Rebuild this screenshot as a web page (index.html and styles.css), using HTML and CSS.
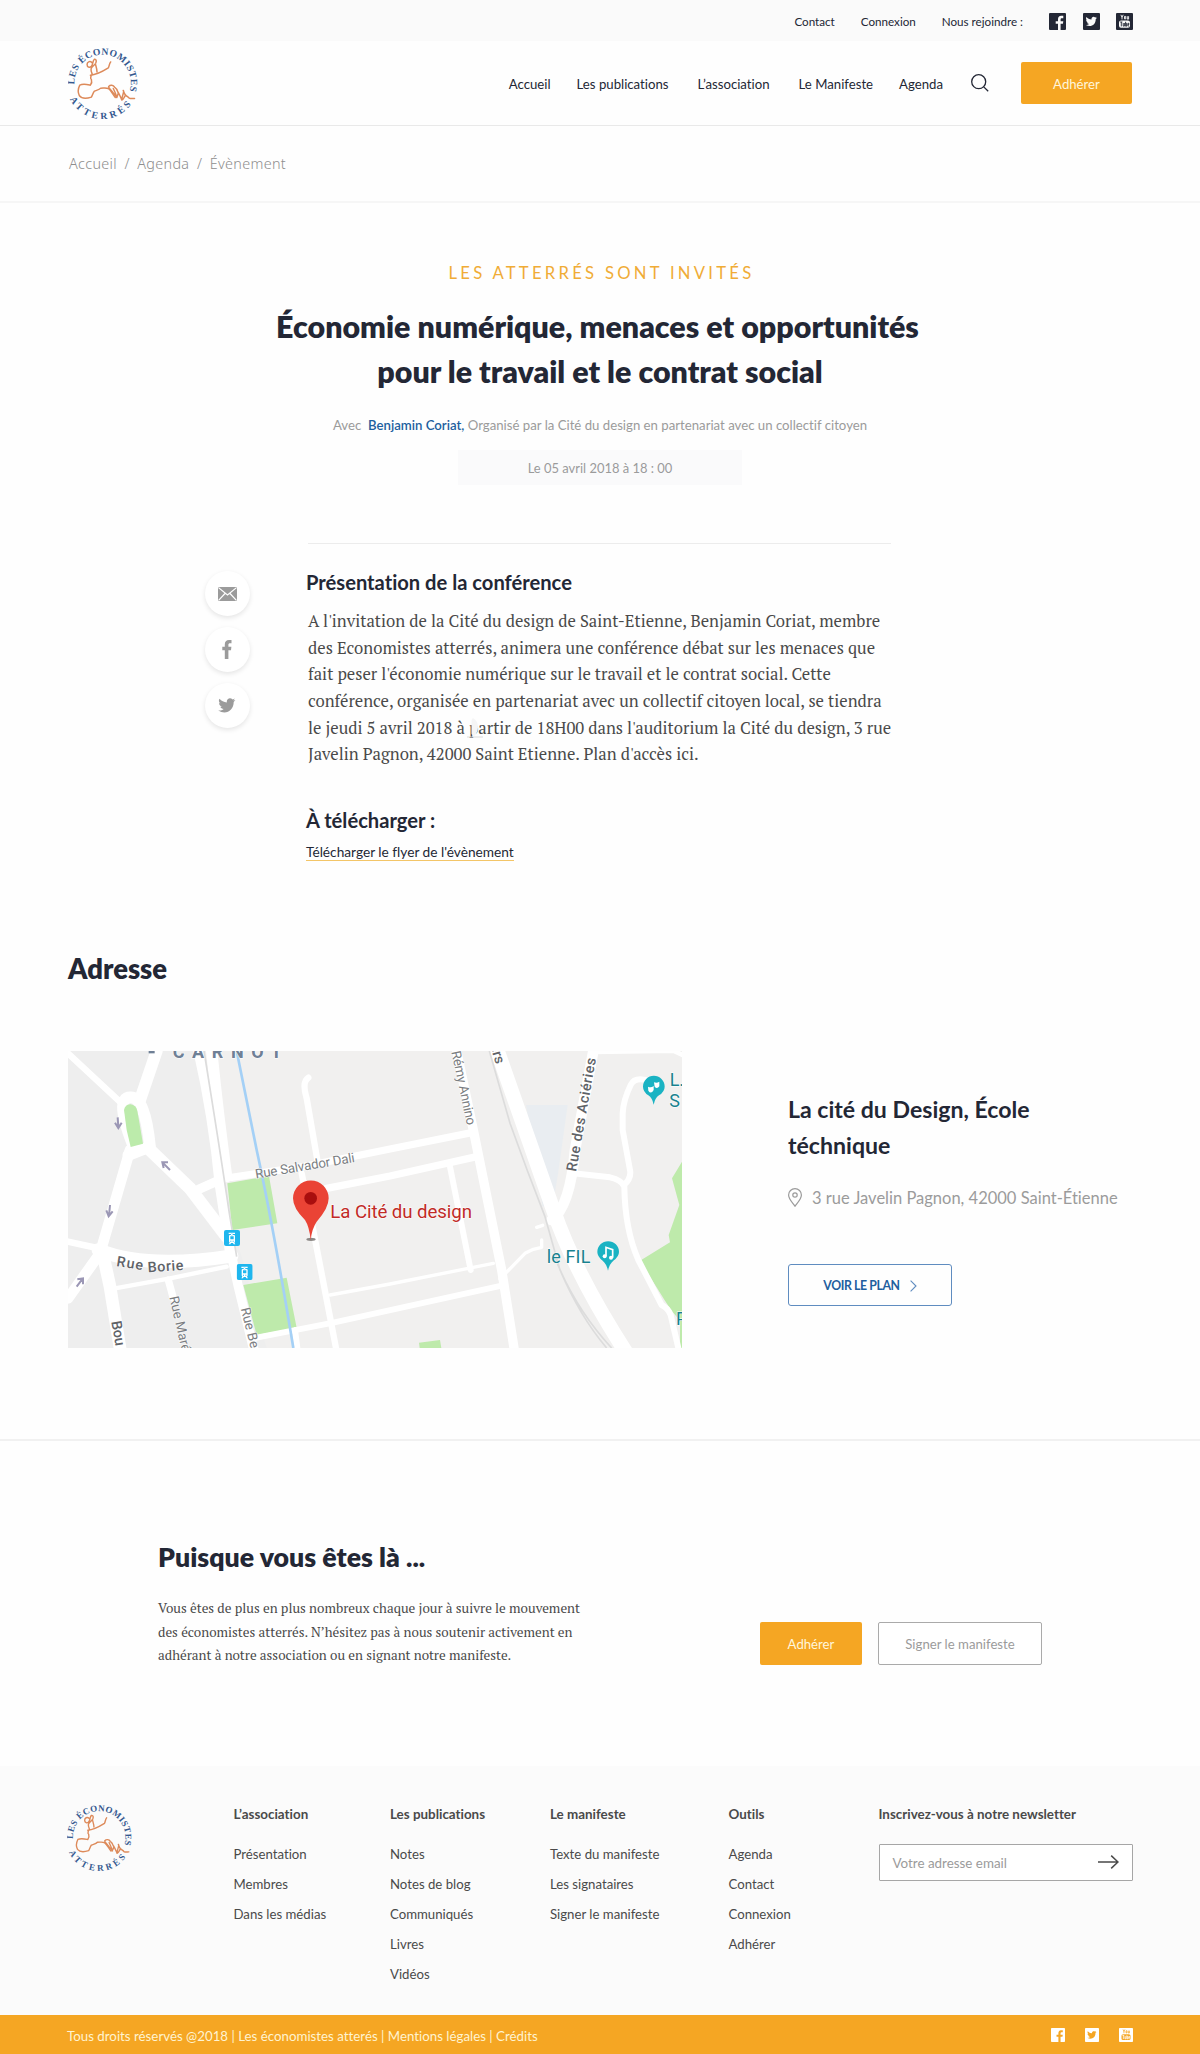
FILE: index.html
```html
<!DOCTYPE html>
<html lang="fr">
<head>
<meta charset="utf-8">
<title>Les économistes atterrés – Évènement</title>
<link rel="stylesheet" href="styles.css">
</head>
<body>
<svg class="sprite" aria-hidden="true">
  <defs>
    <path id="arc-top" d="M43,138 A85,85 0 1 1 211,151"/>
    <path id="arc-bottom" d="M27,176 A108,108 0 0 0 226,176"/>
    <symbol id="logo" viewBox="24 22 210 220">
      <g class="logo-text">
        <text><textPath href="#arc-top" textLength="296">LES ÉCONOMISTES</textPath></text>
        <text><textPath href="#arc-bottom" startOffset="6" textLength="222">ATTERRÉS</textPath></text>
      </g>
      <g class="logo-figure">
        <path d="M96,72c-7-6-15-2-15,6c0,8 8,11 13,5c6-6 3-16 9-21c6-1 7,6 4,12c-4,7-12,10-14,17c-1,6 2,12 4,17M106,76c2,8 5,15 5,24"/>
        <path d="M91,110c20-1 38-12 54-22c3-4 2-12 7-18M93,112c0,4-4,7 1,11c2,6 0,13-3,17c-10-2-22-5-32,0c-5,10-6,23-1,32c7,9 24,8 36,4c4-7 5-13 9-18c7-3 15-4 19-9c9,0 16-2 23,1c9,6 14,20 21,27"/>
        <path d="M146,144c5-5 14-5 18,2c7,4 9,12 11,18c-1,5-2,9-5,13c-7-10-14-18-24-31M160,150c5,10 8,18 11,27M190,156c5,3-5,16-4,29c3,1 7-9 11-15c4,4 9,6 11,9c6,3 10,1 16,1M174,160c5,8 8,16 12,25M190,156c2,6 4,11 7,14"/>
      </g>
    </symbol>
    <symbol id="facebook" viewBox="0 0 17 17"><path fill-rule="evenodd" d="M1 0h15a1 1 0 0 1 1 1v15a1 1 0 0 1-1 1H1a1 1 0 0 1-1-1V1a1 1 0 0 1 1-1zM9 17h2.600v-6.300h2.300l.4-2.500h-2.700V6.500c0-.8.4-1.200 1.200-1.200h1.500V2.800h-2.200C10.200 2.800 9 4.200 9 6.200v2H6.700v2.500H9z"/></symbol>
    <symbol id="twitter" viewBox="0 0 17 17"><path fill-rule="evenodd" d="M1 0h15a1 1 0 0 1 1 1v15a1 1 0 0 1-1 1H1a1 1 0 0 1-1-1V1a1 1 0 0 1 1-1zM14 4.800l-1.300.3.900-1.300-1.500.6C11 3.200 8.200 3.800 8.500 6.400 6.300 6.300 4.700 5.400 3.400 3.900c-.7 1.300-.3 2.600.7 3.300l-1-.2c0 1.200.8 2 1.900 2.300l-1 .1c.3.900 1 1.400 2.100 1.500-.9.800-2 1.100-3.300 1 5 2.900 10-.2 9.900-5.700z"/></symbol>
    <symbol id="youtube" viewBox="0 0 17 17"><path fill-rule="evenodd" d="M1 0h15a1 1 0 0 1 1 1v15a1 1 0 0 1-1 1H1a1 1 0 0 1-1-1V1a1 1 0 0 1 1-1zM5 7.500Q3 7.500 3 9.500v3.200q0 2 2 2h7q2 0 2-2V9.500q0-2-2-2z"/><path class="youtube-hollow" d="M4.900 1.800l1.100 2.600v2M7.200 1.800L6 4.400M8.500 3.400v2.500h1.200V3.400zM11.300 3.200v2.900h1.300V3.200"/><path class="youtube-solid" d="M4.200 9h2.200M5.300 9v4.400M7.200 10v3.100h1.200V10M9.600 8.800v4.400h1v-2.800h-1M12.900 13h-1v-2.700h1v1.300h-1"/></symbol>
    <symbol id="bird" viewBox="0 0 20 17"><path d="M19.500 2.300l-2.300.6L19 .6l-2.600 1C13.500-1.200 9.200.8 9.800 5 6.400 4.800 3.600 3.300 1.500.8.2 3.200.8 5 2.700 6.300L1 5.800c0 2 1.200 3.400 3.200 4l-1.700.1c.5 1.500 1.800 2.500 3.700 2.600C4.500 13.900 2.400 14.500 0 14.200c8.700 5.300 17.700.2 17.600-9.800z"/></symbol>
    <symbol id="tram" viewBox="0 0 48 48"><rect width="48" height="48" rx="6" fill="#1fb6ee"/><path fill="#fff" fill-rule="evenodd" d="M14 8h19v4H14zM21 11h5v5h-5zM18 15h12q3 0 3 3v16q0 3-2 4l3 5h-5l-2-4h-6l-2 4h-5l3-5q-2-1-2-4V18q0-3 3-3zM19 19v9h10v-9zM19 32v3h3v-3zM26 32v3h3v-3z"/></symbol>
  </defs>
</svg>

<div class="topbar">
  <a>Contact</a><a>Connexion</a><span class="join">Nous rejoindre :</span>
  <div class="socials"><svg><use href="#facebook"/></svg><svg><use href="#twitter"/></svg><svg><use href="#youtube"/></svg></div>
</div>

<header class="header">
  <svg class="logo"><use href="#logo"/></svg>
  <nav class="nav">
    <a class="n1">Accueil</a><a class="n2">Les publications</a><a class="n3">L’association</a><a class="n4">Le Manifeste</a><a class="n5">Agenda</a>
    <svg class="search" viewBox="0 0 18 18"><circle cx="7.700" cy="7.700" r="7"/><path d="M12.700 12.900L17.200 17.300"/></svg>
  </nav>
  <a class="button join-button">Adhérer</a>
</header>

<div class="breadcrumb"><a>Accueil</a><span>/</span><a>Agenda</a><span>/</span><a>Évènement</a></div>

<section class="hero">
  <p class="overline">LES ATTERRÉS SONT INVITÉS</p>
  <h1><span>Économie numérique, menaces et opportunités</span> pour le travail et le contrat social</h1>
  <p class="meta">Avec&nbsp; <b>Benjamin Coriat,</b> Organisé par la Cité du design en partenariat avec un collectif citoyen</p>
  <p class="date">Le 05 avril 2018 à 18 : 00</p>
</section>

<section class="article">
  <aside class="share">
    <a><svg width="19" height="14" viewBox="0 0 19 14"><rect width="19" height="14" rx="1"/><path class="fold" d="M.5.600L9.500 8l9-7.400M.6 13.400L7 6.500M18.400 13.400L12 6.500"/></svg></a>
    <a><svg width="10" height="19" viewBox="0 0 10 19"><path d="M2.800 19V10.200H.3V6.800h2.500V4.500C2.800 1.700 4.300 0 7 0h2.500v3.300H8C6.900 3.300 6.400 3.800 6.400 4.800v2h3L9 10.200H6.400V19z"/></svg></a>
    <a><svg width="18" height="15"><use href="#bird"/></svg></a>
  </aside>
  <div class="body">
    <h2>Présentation de la conférence</h2>
    <p class="text">A l'invitation de la Cité du design de Saint-Etienne, Benjamin Coriat, membre<br>des Economistes atterrés, animera une conférence débat sur les menaces que<br>fait peser l'économie numérique sur le travail et le contrat social. Cette<br>conférence, organisée en partenariat avec un collectif citoyen local, se tiendra<br>le jeudi 5 avril 2018 à <span class="marked">p<svg class="mark" viewBox="0 0 17 20"><path fill="#f5f5f5" d="M6 0q5 3 5 9t-4 9L4.500 16V2z"/><path fill="#dcdcdc" d="M0 18.500h16v1H0z"/></svg></span>artir de 18H00 dans l'auditorium la Cité du design, 3 rue<br>Javelin Pagnon, 42000 Saint Etienne. Plan d'accès ici.</p>
    <h2 class="download">À télécharger :</h2>
    <a class="file">Télécharger le flyer de l'évènement</a>
  </div>
</section>

<section class="address">
  <h2>Adresse</h2>
  <div class="place">
    <svg class="map" viewBox="24 33 1842 891">
      <rect x="24" y="33" width="1842" height="891" fill="#f1f0ef"/>
      <path fill="#eeeeee" d="M24 33h400L520 560 620 924H24z"/>
      <path fill="#e9edf1" d="M1398 195h125l-28 200-15 90-32 15z"/>
      <g fill="#beeaab">
        <path d="M502 430l125-22 25 142-135 20zM550 735l130-22 30 150-120 22zM1866 365l-30 50 22 80-32 90 4 22-90 55 75 120 20 30 25 30v100h6zM1077 908l63-8 4 24h-65z"/>
      </g>
      <g class="roads">
        <path stroke-width="19" d="M24 40L185 190"/>
        <path stroke-width="36" d="M290 33L240 180"/>
        <path stroke-width="35" d="M225 330Q160 170 212 172Q255 170 270 320L205 345"/>
        <path stroke-width="32" d="M210 330L120 640L24 775"/>
        <path stroke-width="20" d="M24 605L115 625"/>
        <path stroke-width="40" d="M115 630Q260 688 515 648"/>
        <path stroke-width="30" d="M415 33Q460 230 480 440L512 650"/>
        <path stroke-width="34" d="M455 33Q475 230 500 410"/>
        <path stroke-width="28" d="M500 580L535 740L580 924"/>
        <path stroke-width="38" d="M265 325L390 445L500 590"/>
        <path stroke-width="28" d="M400 455L490 415"/>
        <path stroke-width="38" d="M125 625L150 740L180 924"/>
        <path stroke-width="13" d="M165 745L330 715L500 680"/>
        <path stroke-width="22" d="M325 720L340 775"/>
        <path stroke-width="22" d="M515 412L730 380L990 327L1235 278"/>
        <path stroke-width="19" d="M745 113Q725 125 740 175L772 360M725 400L750 520L828 924"/>
        <path stroke-width="22" d="M800 445L990 408L1250 350"/>
        <path stroke-width="28" d="M1190 33L1240 270L1325 690L1362 924"/>
        <path stroke-width="18" d="M1168 370L1232 690"/>
        <path stroke-width="10" d="M810 765L990 732L1300 670M1320 717L1395 640L1420 628L1445 622V600M1430 562L1448 556"/>
        <path stroke-width="18" d="M590 893L820 848L1325 737M705 870L712 924"/>
        <path stroke-width="44" d="M1308 20L1480 510Q1545 700 1700 940"/>
        <path stroke-width="32" d="M1600 33L1545 330Q1530 500 1475 540"/>
        <path stroke-width="18" d="M1540 400L1650 412Q1685 420 1693 440Q1695 570 1735 660L1805 795Q1825 805 1832 825L1855 924M1692 435Q1715 415 1710 390L1688 270V220Q1690 180 1712 135Q1725 107 1775 125"/>
        <path stroke-width="14" d="M1600 36L1840 32L1870 46"/>
      </g>
      <path class="rail" d="M432 33Q480 330 508 520L530 650M1288 33L1350 250Q1400 390 1455 530L1500 690Q1560 830 1640 924M1480 640Q1540 800 1655 924"/>
      <path fill="#bcebab" d="M192 210Q195 193 212 193Q228 195 232 212L249 311 212 321 200 270Z"/>
      <path fill="none" stroke="#a4d0f6" stroke-width="8" d="M530 33L590 330Q640 560 700 924"/>
      <g class="arrows"><path d="M173 232l2 30m-10-14l10 16 10-16M150 495l-3 32m-8-16l7 18 12-15M330 390l-22-22m3 16l-4-17 17 0M50 740l18-24m-16 2l17-3 0 18"/></g>
      <g class="street">
        <text x="338" y="54" class="district" textLength="328">CARNOT</text><path d="M266 33h18v7h-18z" fill="#6f8096"/>
        <text transform="translate(588 416) rotate(-9.500)" textLength="302">Rue Salvador Dali</text>
        <text transform="translate(168 678) rotate(9)" class="main" textLength="80">Rue</text>
        <text transform="translate(264 697) rotate(-4)" class="main" textLength="107">Borie</text>
        <text transform="translate(154 845) rotate(80)" class="main">Bou</text>
        <text transform="translate(328 772) rotate(77)">Rue Maréchal</text>
        <text transform="translate(542 806) rotate(76)">Rue Benoît</text>
        <text transform="translate(1174 36) rotate(78)" textLength="226">Rémy Annino</text>
        <text transform="translate(1290 16) rotate(73)" class="main">ers</text>
        <text transform="translate(1548 396) rotate(-80)" class="main" textLength="345">Rue des Aciéries</text>
      </g>
      <use href="#tram" x="492" y="570" width="48" height="48"/><use href="#tram" x="530" y="672" width="48" height="48"/>
      <ellipse cx="753" cy="598" rx="14" ry="5" fill="#8c8886"/>
      <path fill="#ea4335" d="M752 600Q748 560 735 540Q699 505 699 475A53.500 53.500 0 0 1 806 475Q806 505 770 545Q756 565 752 600Z"/><circle cx="752" cy="475" r="19" fill="#a90e0e"/>
      <g class="poi">
        <text x="811" y="533" class="city" textLength="425">La Cité du design</text>
        <text x="1460" y="668" textLength="131">le FIL</text>
        <text x="1829" y="139">L.</text><text x="1828" y="201">S</text><text x="1848" y="856">P</text>
      </g>
      <g fill="#1ab3c3">
        <path d="M1644 692Q1640 672 1628 662Q1612 650 1612 636A32.500 32.500 0 0 1 1677 636Q1677 650 1660 662Q1648 672 1644 692ZM1781 194Q1777 174 1765 166Q1749 155 1749 140A32.500 32.500 0 0 1 1814 140Q1814 155 1797 166Q1785 174 1781 194Z"/>
      </g>
      <path fill="none" stroke="#fff" stroke-width="5" d="M1638 648v-26l20 7v24"/><g fill="#fff"><circle cx="1634" cy="649" r="6"/><circle cx="1653" cy="653" r="6"/><path d="M1764 140q9 4 17-2v12q-8 14-16 2zM1782 127q9 3 16-2v14q-7 10-14 1z"/></g>
    </svg>
    <div class="venue">
      <h3>La cité du Design, École<br>téchnique</h3>
      <p><svg width="14" height="19" viewBox="0 0 14 19"><path d="M7 18.300C5.500 15.500.6 11.500.6 7A6.400 6.400 0 0 1 13.400 7C13.400 11.500 8.500 15.500 7 18.300Z"/><circle cx="7" cy="7" r="2.200"/></svg>3 rue Javelin Pagnon, 42000 Saint-Étienne</p>
      <a class="plan">VOIR LE PLAN<svg width="7" height="12" viewBox="0 0 7 12"><path d="M.6.600L6 6 .6 11.400"/></svg></a>
    </div>
  </div>
</section>

<section class="support">
  <div class="pitch">
    <h2>Puisque vous êtes là ...</h2>
    <p>Vous êtes de plus en plus nombreux chaque jour à suivre le mouvement<br>des économistes atterrés. N’hésitez pas à nous soutenir activement en<br>adhérant à notre association ou en signant notre manifeste.</p>
  </div>
  <a class="button support-join">Adhérer</a>
  <a class="button outline">Signer le manifeste</a>
</section>

<footer class="footer">
  <svg class="logo"><use href="#logo"/></svg>
  <div class="col"><h4>L’association</h4><a>Présentation</a><a>Membres</a><a>Dans les médias</a></div>
  <div class="col"><h4>Les publications</h4><a>Notes</a><a>Notes de blog</a><a>Communiqués</a><a>Livres</a><a>Vidéos</a></div>
  <div class="col"><h4>Le manifeste</h4><a>Texte du manifeste</a><a>Les signataires</a><a>Signer le manifeste</a></div>
  <div class="col"><h4>Outils</h4><a>Agenda</a><a>Contact</a><a>Connexion</a><a>Adhérer</a></div>
  <div class="col newsletter"><h4>Inscrivez-vous à notre newsletter</h4>
    <div class="field"><span>Votre adresse email</span><svg width="21" height="14" viewBox="0 0 21 14"><path d="M0 7h20M13.200.6L20 7l-6.800 6.400"/></svg></div>
  </div>
</footer>
<div class="legal">
  <span>Tous droits réservés @2018 | Les économistes atterés | Mentions légales | Crédits</span>
  <div class="socials"><svg><use href="#facebook"/></svg><svg><use href="#twitter"/></svg><svg><use href="#youtube"/></svg></div>
</div>
</body>
</html>
```
FILE: styles.css
```css
* { box-sizing: border-box; margin: 0; padding: 0; }
body { width: 1200px; background: #fefefe; color: #232735; font: 13.2px/20px "Lato", sans-serif; font-variant-ligatures: none; }
svg { display: block; flex: none; }
.sprite { position: absolute; width: 0; height: 0; }

.topbar { height: 41px; background: #fafafa; display: flex; justify-content: flex-end; align-items: center; padding: 2px 67px 0 0; font-size: 11.65px; --surface: #fafafa; }
.topbar a { margin-right: 26px; }
.topbar .join { margin-right: 26px; }
.socials { display: flex; }
.topbar .socials { gap: 16.500px; color: #232735; }
.socials svg { width: 17px; height: 17px; fill: currentColor; }
.youtube-hollow { fill: none; stroke: var(--surface); stroke-width: .9; }
.youtube-solid { fill: none; stroke: currentColor; stroke-width: .9; }

.header { height: 85px; border-bottom: 1px solid #e9e9e9; display: flex; align-items: center; padding: 0 68px; }
.header .logo { width: 70px; height: 73px; margin-top: -1px; }
.nav { display: flex; align-items: center; margin-left: auto; padding-top: 2px; }
.nav .n1, .nav .n4 { margin-right: 26px; }
.nav .n2, .nav .n3 { margin-right: 29px; }
.nav .n5 { margin-right: 28px; }
.search { width: 18px; height: 18px; margin-top: -3px; fill: none; stroke: #232735; stroke-width: 1.300; }
.button { display: flex; align-items: center; justify-content: center; height: 42px; padding-top: 1px; background: #f5a623; color: #fff6dc; border-radius: 2px; }
.join-button { width: 111px; margin-left: 32px; }

.breadcrumb { height: 77px; border-bottom: 2px solid #f6f6f6; padding-left: 69px; display: flex; align-items: center; gap: 7.500px; color: #8e8e8e; font: 300 14.4px/20px "Noto Sans", sans-serif; letter-spacing: .32px; }

.hero { height: 340px; padding-top: 60px; display: flex; flex-direction: column; align-items: center; text-align: center; color: #9b9b9b; }
.overline { color: #f0ac36; font-size: 16.67px; letter-spacing: 3.26px; padding-left: 3px; }
h1 { margin-top: 21px; width: 670px; color: #232735; font-size: 30.4px; line-height: 45px; font-weight: 800; }
h1 span { display: block; padding-right: 5px; }
.meta { margin-top: 21px; white-space: nowrap; }
.meta b { color: #1d5f9e; font-weight: 600; }
.date { margin-top: 15px; width: 284px; height: 35px; line-height: 36px; background: #fafafb; font-size: 12.95px; }

.article { height: 386px; display: flex; padding-left: 204px; }
.share { width: 102px; padding-top: 28px; display: flex; flex-direction: column; gap: 11px; }
.share a { width: 45px; height: 45px; margin-left: .5px; border-radius: 50%; background: #fff; box-shadow: 0 2px 5px rgba(0,0,0,.1); display: flex; align-items: center; justify-content: center; }
.share svg { fill: #9b9b9b; }
.share .fold { fill: none; stroke: #fff; stroke-width: 1.200; }
.body { width: 585px; }
.body::before { content: ""; display: block; height: 1px; margin: 0 0 25px 2px; background: #ececec; }
.body h2 { font-size: 20.15px; line-height: 26px; font-weight: 700; }
.text { margin: 13px 0 0 2px; color: #4a4a4a; font: 16.68px/26.67px "PT Serif", "Noto Serif", serif; white-space: nowrap; }
.marked { position: relative; }
.mark { position: absolute; left: -2px; top: 1px; width: 17px; height: 20px; }
.body .download { margin-top: 39px; }
.file { display: inline-block; margin-top: 10px; font-size: 13.7px; line-height: 17px; border-bottom: 1px solid #f3c567; }

.address { height: 512px; border-bottom: 2px solid #f1f1f1; padding: 23px 68px 0; }
.address h2 { font-size: 27.4px; line-height: 34px; font-weight: 800; }
.place { display: flex; margin-top: 65px; }
.map { width: 614px; height: 297px; }
.roads { fill: none; stroke: #fff; stroke-linejoin: round; stroke-linecap: round; }
.rail { fill: none; stroke: #dcdcdc; stroke-width: 5; }
.arrows { fill: none; stroke: #9b97b5; stroke-width: 6; }
.street text { font-family: Roboto, sans-serif; font-size: 40px; fill: #7b7e82; stroke: #fff; stroke-width: 3px; paint-order: stroke; }
.street .main { font-size: 43px; font-weight: 500; fill: #5f6368; }
.street .district { font-size: 54px; font-weight: 700; fill: #6f8096; }
.poi text { font-family: Roboto, sans-serif; font-size: 54px; fill: #18828f; stroke: #fff; stroke-width: 3px; paint-order: stroke; }
.poi .city { font-size: 56px; fill: #c12a26; }
.venue { margin-left: 106px; padding-top: 40px; }
.venue h3 { font-size: 23.1px; line-height: 36px; font-weight: 700; }
.venue p { display: flex; align-items: center; gap: 10px; margin-top: 25px; color: #9b9b9b; font-size: 16.5px; white-space: nowrap; }
.venue p svg { fill: none; stroke: #9b9b9b; stroke-width: 1.200; margin-top: -2px; }
.plan { width: 164px; height: 42px; margin-top: 56px; border: 1px solid #5f8cc0; border-radius: 3px; color: #1f5f9f; font-size: 12.3px; letter-spacing: -.4px; font-weight: 700; display: flex; align-items: center; justify-content: center; gap: 10px; padding-top: 1px; }
.plan svg { fill: none; stroke: #5f8cc0; stroke-width: 1.100; }

.support { height: 325px; padding: 99px 158px 0; display: flex; align-items: flex-start; }
.pitch { width: 602px; }
.pitch h2 { font-size: 26.7px; line-height: 34px; font-weight: 800; }
.pitch p { margin-top: 23px; color: #4a4a4a; font: 13.35px/23.5px "PT Serif", "Noto Serif", serif; }
.support .button { margin-top: 82px; height: 43px; }
.support-join { width: 102px; }
.outline { width: 164px; margin-left: 16px; background: #fff; border: 1px solid #aaa; color: #9b9b9b; }

.footer { height: 249px; background: #fbfbfb; display: grid; grid-template-columns: 166.500px 156.500px 160px 178.500px 150px 254px; padding: 38px 0 0 67px; color: #4a4a4a; }
.footer .logo { width: 65px; height: 68px; margin-top: -1px; }
.col h4 { font-size: 13.4px; font-weight: 700; margin-bottom: 15px; white-space: nowrap; }
.col a { display: block; line-height: 30px; }
.newsletter h4 { margin-bottom: 20px; }
.field { height: 37px; border: 1px solid #a6a6a6; border-radius: 1px; background: #fff; display: flex; align-items: center; justify-content: space-between; padding: 1px 13px 0; color: #9b9b9b; font-size: 13.4px; }
.field svg { fill: none; stroke: #4a4a4a; stroke-width: 1.500; margin-top: -2px; }
.legal { height: 39px; background: #f5a623; color: #fff3d0; display: flex; justify-content: space-between; align-items: center; padding: 3px 67px 0; font-size: 13.3px; --surface: #f5a623; }
.legal .socials { gap: 20px; color: #fff; margin-top: -3px; }
.legal .youtube-hollow { stroke-width: 1.100; }
.legal .socials svg { width: 14px; height: 14px; }

.logo-text text { font: 700 29px "Liberation Serif", serif; fill: #33588f; }
.logo-figure { fill: none; stroke: #dd8a5a; stroke-width: 4.500; stroke-linecap: round; stroke-linejoin: round; }
```
